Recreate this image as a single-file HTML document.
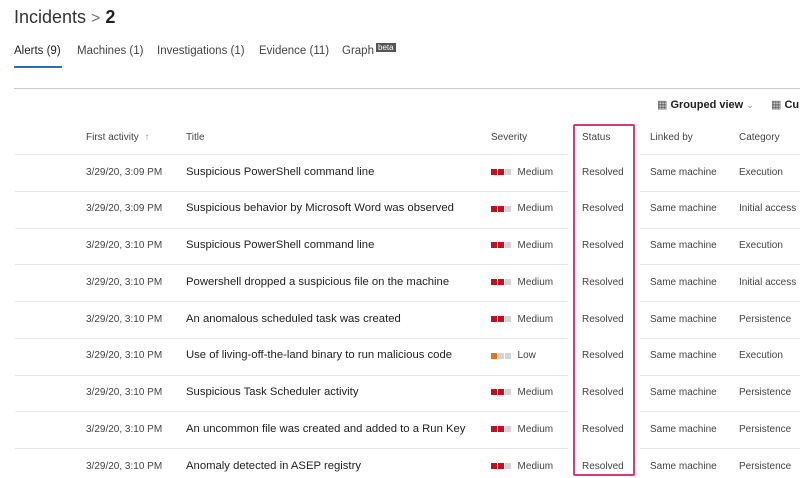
<!DOCTYPE html>
<html><head><meta charset="utf-8"><style>
body{margin:0;width:800px;height:478px;overflow:hidden;background:#fff;font-family:"Liberation Sans",sans-serif;color:#323130;position:relative}
.a{position:absolute;white-space:nowrap;line-height:12px}
.line{position:absolute;height:1px;background:#e6e6e6}
.sq{display:inline-block;width:6px;height:6px;margin-right:1px;vertical-align:middle}
.r{background:#c50f1f}.g{background:#d4d4d4}.o{background:#e8711c}
.d{font-size:10px;color:#444}
.t{font-size:11.3px;color:#222}
.s{font-size:10px;color:#444}
</style></head><body>
<div class="a" style="left:14px;top:7px;font-size:18px;line-height:20px;color:#333">Incidents <span style="color:#777;font-size:16px">&gt;</span> <b style="color:#222">2</b></div>
<div class="a" style="left:14px;top:45px;font-size:11.5px;color:#222">Alerts (9)</div>
<div class="a" style="left:14px;top:66px;width:48px;height:2px;background:#2f6fb0"></div>
<div class="a" style="left:77px;top:45px;font-size:11.5px;color:#444">Machines (1)</div>
<div class="a" style="left:157px;top:45px;font-size:11.5px;color:#444">Investigations (1)</div>
<div class="a" style="left:259px;top:45px;font-size:11.5px;color:#444">Evidence (11)</div>
<div class="a" style="left:342px;top:45px;font-size:11.5px;color:#444">Graph</div>
<div class="a" style="left:376px;top:43px;font-size:8px;color:#fff;background:#555;padding:0 2px;line-height:9px">beta</div>
<div class="line" style="left:14px;top:88px;width:786px;background:#ccc"></div>
<div class="a" style="left:657px;top:99px;font-size:11px;font-weight:bold;color:#222"><span style="font-weight:normal;color:#555">&#9638;</span> Grouped view <span style="font-weight:normal;color:#888;font-size:9px">&#8964;</span></div>
<div class="a" style="left:771px;top:99px;font-size:11px;font-weight:bold;color:#222"><span style="font-weight:normal;color:#555">&#9638;</span> Cu</div>
<div class="a s" style="left:86px;top:132px">First activity &nbsp;<span style="color:#999">&#8593;</span></div>
<div class="a s" style="left:186px;top:132px">Title</div>
<div class="a s" style="left:491px;top:132px">Severity</div>
<div class="a s" style="left:582px;top:132px">Status</div>
<div class="a s" style="left:650px;top:132px">Linked by</div>
<div class="a s" style="left:739px;top:132px">Category</div>
<div id="rows"></div>
<div class="a" style="left:573px;top:124px;width:58px;height:348px;border:2px solid #d63a78;border-radius:2px"></div>
<script>
var d=[["3/29/20, 3:09 PM","Suspicious PowerShell command line","M","Execution"],
["3/29/20, 3:09 PM","Suspicious behavior by Microsoft Word was observed","M","Initial access"],
["3/29/20, 3:10 PM","Suspicious PowerShell command line","M","Execution"],
["3/29/20, 3:10 PM","Powershell dropped a suspicious file on the machine","M","Initial access"],
["3/29/20, 3:10 PM","An anomalous scheduled task was created","M","Persistence"],
["3/29/20, 3:10 PM","Use of living-off-the-land binary to run malicious code","L","Execution"],
["3/29/20, 3:10 PM","Suspicious Task Scheduler activity","M","Persistence"],
["3/29/20, 3:10 PM","An uncommon file was created and added to a Run Key","M","Persistence"],
["3/29/20, 3:10 PM","Anomaly detected in ASEP registry","M","Persistence"]];
var h="";
for(var i=0;i<9;i++){var y=154+i*36.75;var c=y+17.5;
h+='<div class="line" style="left:15px;top:'+y+'px;width:553px"></div><div class="line" style="left:640px;top:'+y+'px;width:160px"></div>';
var sev=d[i][2]=="M"?'<span class="sq r"></span><span class="sq r"></span><span class="sq g"></span>&nbsp; Medium':'<span class="sq o"></span><span class="sq g"></span><span class="sq g"></span>&nbsp; Low';
h+='<div class="a d" style="left:86px;top:'+(c-5)+'px">'+d[i][0]+'</div>';
h+='<div class="a t" style="left:186px;top:'+(c-6)+'px">'+d[i][1]+'</div>';
h+='<div class="a s" style="left:491px;top:'+(c-5)+'px">'+sev+'</div>';
h+='<div class="a s" style="left:582px;top:'+(c-5)+'px">Resolved</div>';
h+='<div class="a s" style="left:650px;top:'+(c-5)+'px">Same machine</div>';
h+='<div class="a s" style="left:739px;top:'+(c-5)+'px">'+d[i][3]+'</div>';}
document.getElementById("rows").innerHTML=h;
</script>
</body></html>
